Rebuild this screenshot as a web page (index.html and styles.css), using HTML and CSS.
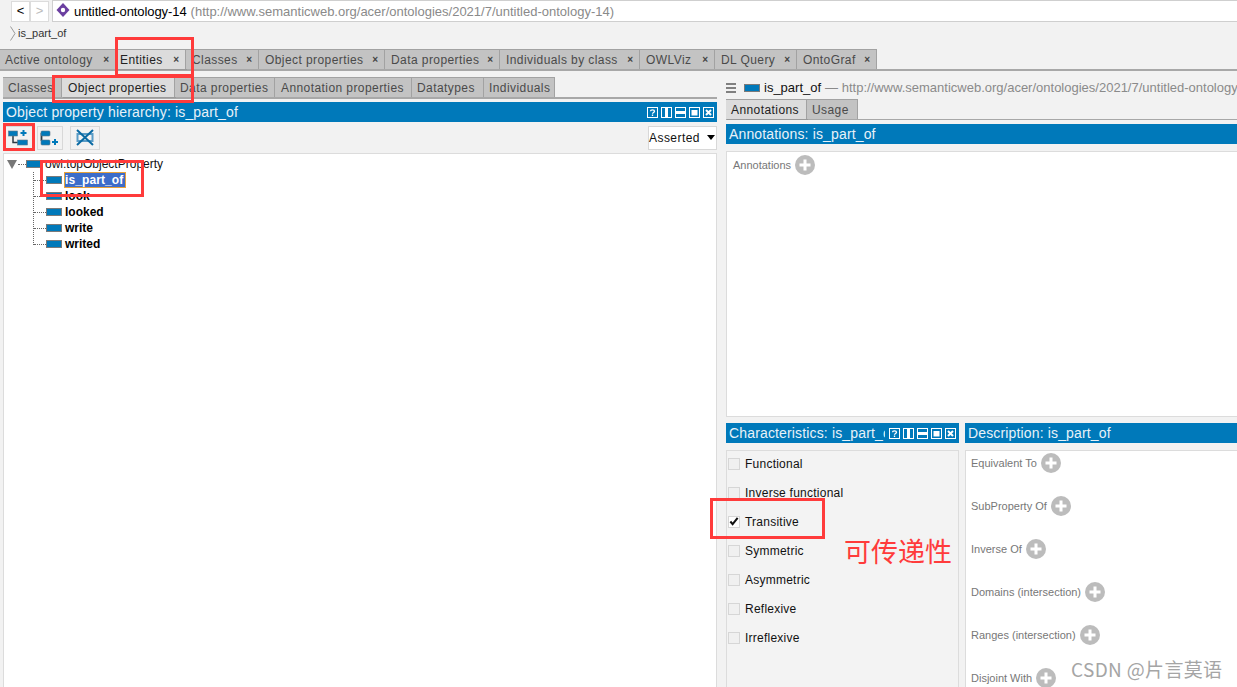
FILE: index.html
```html
<!DOCTYPE html>
<html lang="en">
<head>
<meta charset="utf-8">
<title>untitled-ontology-14</title>
<link rel="stylesheet" href="styles.css">
</head>
<body>
<svg class="defs" width="0" height="0" aria-hidden="true">
  <defs>
    <symbol id="prop" viewBox="0 0 16 8"><rect x="0.5" y="0.5" width="15" height="7" fill="#0079ba" stroke="#7a7a7a"/></symbol>
    <symbol id="plus" viewBox="0 0 20 20"><circle cx="10" cy="10" r="10" fill="#bcbcbc"/><path d="M10 4.500v11M4.500 10h11" stroke="#fff" stroke-width="3"/></symbol>
    <symbol id="ctl-help" viewBox="0 0 11 11"><rect width="11" height="11" fill="#fff"/><rect x="1" y="1" width="9" height="9" fill="#0079ba"/><path d="M3.500 4.200c0-1.800 4-1.800 4 0 0 1.300-2 1.300-2 2.600M5.500 7.500v1.500" stroke="#fff" stroke-width="1.300" fill="none"/></symbol>
    <symbol id="ctl-v" viewBox="0 0 11 11"><rect width="11" height="11" fill="#fff"/><rect x="1" y="1" width="3" height="9" fill="#0079ba"/><rect x="7" y="1" width="3" height="9" fill="#0079ba"/></symbol>
    <symbol id="ctl-h" viewBox="0 0 11 11"><rect width="11" height="11" fill="#fff"/><rect x="1" y="1" width="9" height="3" fill="#0079ba"/><rect x="1" y="7" width="9" height="3" fill="#0079ba"/></symbol>
    <symbol id="ctl-max" viewBox="0 0 11 11"><rect width="11" height="11" fill="#fff"/><rect x="1" y="1" width="9" height="9" fill="#0079ba"/><rect x="2.500" y="3" width="6" height="5.500" fill="#fff"/></symbol>
    <symbol id="ctl-x" viewBox="0 0 11 11"><rect width="11" height="11" fill="#fff"/><rect x="1" y="1" width="9" height="9" fill="#0079ba"/><path d="M3 3l5 5M8 3l-5 5" stroke="#fff" stroke-width="2"/></symbol>
  </defs>
</svg>

<header class="nav">
  <div class="nav-btn">&lt;</div>
  <div class="nav-btn dim">&gt;</div>
  <div class="address">
    <svg class="onto" width="14" height="14" viewBox="0 0 14 14"><path d="M7 0l6.500 7L7 14 .5 7z" fill="#6b3fa0"/><circle cx="7" cy="7" r="2.200" fill="#fff"/></svg>
    <span class="addr-name">untitled-ontology-14</span>
    <span class="addr-url">(http://www.semanticweb.org/acer/ontologies/2021/7/untitled-ontology-14)</span>
  </div>
</header>
<div class="crumb">
  <svg width="6" height="15" viewBox="0 0 6 15"><path d="M.5 .5l4.500 7-4.500 7" fill="none" stroke="#9a9a9a"/></svg>
  <span>is_part_of</span>
</div>

<nav class="tabs main-tabs">
  <div class="tab t1">Active ontology<i>×</i></div>
  <div class="tab t2 active">Entities<i>×</i></div>
  <div class="tab t3">Classes<i>×</i></div>
  <div class="tab t4">Object properties<i>×</i></div>
  <div class="tab t5">Data properties<i>×</i></div>
  <div class="tab t6">Individuals by class<i>×</i></div>
  <div class="tab t7">OWLViz<i>×</i></div>
  <div class="tab t8">DL Query<i>×</i></div>
  <div class="tab t9">OntoGraf<i>×</i></div>
</nav>

<main class="workspace">
  <section class="left">
    <nav class="tabs sub-tabs">
      <div class="tab s1">Classes</div>
      <div class="tab s2 active">Object properties</div>
      <div class="tab s3">Data properties</div>
      <div class="tab s4">Annotation properties</div>
      <div class="tab s5">Datatypes</div>
      <div class="tab s6">Individuals</div>
    </nav>
    <div class="bar hierarchy-bar">
      <span class="bar-title">Object property hierarchy: is_part_of</span>
      <div class="ctls">
        <svg><use href="#ctl-help"/></svg><svg><use href="#ctl-v"/></svg><svg><use href="#ctl-h"/></svg><svg><use href="#ctl-max"/></svg><svg><use href="#ctl-x"/></svg>
      </div>
    </div>
    <div class="toolbar">
      <div class="tool">
        <svg width="20" height="16" viewBox="0 0 20 16"><path d="M5 4v8.500h5" fill="none" stroke="#2b3a44" stroke-width="1.500"/><rect x=".5" y="1" width="9" height="5" fill="#0079ba" stroke="#5f7686" stroke-width=".6"/><rect x="9.500" y="10" width="10" height="5" fill="#0079ba" stroke="#5f7686" stroke-width=".6"/><path d="M15.500 0v6M12.500 3h6" stroke="#0079ba" stroke-width="2"/></svg>
      </div>
      <div class="tool t-second">
        <svg width="20" height="16" viewBox="0 0 20 16"><path d="M1.500 3v8" stroke="#2b3a44" stroke-width="1.800"/><rect x="1" y="1" width="9" height="5" rx="1" fill="#0079ba" stroke="#5f7686" stroke-width=".6"/><rect x="1" y="10" width="9" height="5" rx="1" fill="#0079ba" stroke="#5f7686" stroke-width=".6"/><path d="M15 9v6M12 12h6" stroke="#0079ba" stroke-width="2"/></svg>
      </div>
      <div class="tool t-third">
        <svg width="18" height="17" viewBox="0 0 18 17"><rect x="1.500" y="5" width="15" height="7" fill="none" stroke="#5a9cc6" stroke-width="2"/><path d="M1 1l16 15M17 1L1 16" stroke="#0a6aa3" stroke-width="2"/></svg>
      </div>
      <div class="select">Asserted<b></b></div>
    </div>
    <div class="tree">
      <div class="node root"><b class="twist"></b><span class="dots d-root"></span><svg class="prop"><use href="#prop"/></svg><span>owl:topObjectProperty</span></div>
      <div class="children">
        <div class="node kid"><span class="dots"></span><svg class="prop"><use href="#prop"/></svg><strong class="selected">is_part_of</strong></div>
        <div class="node kid"><span class="dots"></span><svg class="prop"><use href="#prop"/></svg><strong>look</strong></div>
        <div class="node kid"><span class="dots"></span><svg class="prop"><use href="#prop"/></svg><strong>looked</strong></div>
        <div class="node kid"><span class="dots"></span><svg class="prop"><use href="#prop"/></svg><strong>write</strong></div>
        <div class="node kid"><span class="dots"></span><svg class="prop"><use href="#prop"/></svg><strong>writed</strong></div>
      </div>
    </div>
  </section>

  <section class="right">
    <div class="ent-head">
      <svg class="burger" width="12" height="10" viewBox="0 0 12 10"><path d="M0 1h12M0 5h12M0 9h12" stroke="#808080" stroke-width="2"/></svg>
      <svg class="prop-head"><use href="#prop"/></svg>
      <span class="ent-name">is_part_of</span>
      <span class="ent-url">— http://www.semanticweb.org/acer/ontologies/2021/7/untitled-ontology</span>
    </div>
    <nav class="tabs right-tabs">
      <div class="tab r1 active">Annotations</div>
      <div class="tab r2">Usage</div>
    </nav>
    <div class="bar ann-bar"><span class="bar-title">Annotations: is_part_of</span></div>
    <div class="ann-panel">
      <div class="frame-row"><span>Annotations</span><svg class="plus"><use href="#plus"/></svg></div>
    </div>
    <div class="bottom">
      <div class="col-char">
        <div class="bar char-bar">
          <span class="bar-title clip">Characteristics: is_part_of</span>
          <div class="ctls">
            <svg><use href="#ctl-help"/></svg><svg><use href="#ctl-v"/></svg><svg><use href="#ctl-h"/></svg><svg><use href="#ctl-max"/></svg><svg><use href="#ctl-x"/></svg>
          </div>
        </div>
        <div class="char-panel">
          <div class="check"><i></i>Functional</div>
          <div class="check"><i></i>Inverse functional</div>
          <div class="check"><i class="on"><svg width="11" height="11" viewBox="0 0 11 11"><path d="M1.500 5.500l2.500 3 5.500-7" fill="none" stroke="#111" stroke-width="2.200"/></svg></i>Transitive</div>
          <div class="check"><i></i>Symmetric</div>
          <div class="check"><i></i>Asymmetric</div>
          <div class="check"><i></i>Reflexive</div>
          <div class="check"><i></i>Irreflexive</div>
        </div>
      </div>
      <div class="col-desc">
        <div class="bar"><span class="bar-title">Description: is_part_of</span></div>
        <div class="desc-panel">
          <div class="frame-row"><span>Equivalent To</span><svg class="plus"><use href="#plus"/></svg></div>
          <div class="frame-row"><span>SubProperty Of</span><svg class="plus"><use href="#plus"/></svg></div>
          <div class="frame-row"><span>Inverse Of</span><svg class="plus"><use href="#plus"/></svg></div>
          <div class="frame-row"><span>Domains (intersection)</span><svg class="plus"><use href="#plus"/></svg></div>
          <div class="frame-row"><span>Ranges (intersection)</span><svg class="plus"><use href="#plus"/></svg></div>
          <div class="frame-row"><span>Disjoint With</span><svg class="plus"><use href="#plus"/></svg></div>
        </div>
      </div>
    </div>
  </section>
</main>

<div class="mark m-entities"></div>
<div class="mark m-objprops"></div>
<div class="mark m-add"></div>
<div class="mark m-node"></div>
<div class="mark m-trans"></div>
<div class="note">可传递性</div>
<div class="watermark">CSDN @片言莫语</div>
</body>
</html>
```
FILE: styles.css
```css
* { box-sizing: border-box; }
html, body { margin: 0; height: 687px; overflow: hidden; }
body {
  position: relative;
  width: 1237px;
  background: #f2f2f2;
  color: #111;
  font: 12px "Liberation Sans", Arial, sans-serif;
}
.defs { position: absolute; }

.nav { display: flex; height: 22px; padding-left: 11px; background: #f2f2f2; }
.nav-btn {
  width: 19px; height: 21px; margin-top: 1px;
  background: #fff; border: 1px solid #dcdcdc;
  text-align: center; font-size: 13px; line-height: 18px; color: #000;
}
.nav-btn.dim { color: #bbb; }
.address {
  display: flex; align-items: center;
  flex: 1; margin-left: 3px; height: 22px; padding-left: 3px;
  background: #fff; border: 1px solid #cfcfcf; border-right: 0;
  font-size: 13px; white-space: nowrap; overflow: hidden;
}
.onto { flex: none; margin-right: 4px; margin-top: -3px; }
.addr-name { color: #000; margin-right: 4px; letter-spacing: -.08px; }
.addr-url { color: #8a8a8a; }

.crumb { display: flex; align-items: center; gap: 2px; height: 22px; padding: 0 0 0 10px; font-size: 11px; color: #333; }

.tabs { display: flex; }
.tab {
  display: flex; align-items: center; justify-content: space-between;
  height: 100%;
  background: #c3c3c3; border: 1px solid #a2a2a2; border-bottom: 0; border-left: 0;
  color: #4a4a4a; letter-spacing: .42px; white-space: nowrap;
  padding-left: 5px;
}
.tab.active { background: #dcdcdc; color: #222; box-shadow: 1px 1px 0 #9a9a9a; }
.main-tabs { height: 20px; margin-top: 5px; }
.main-tabs .tab { padding-left: 6px; padding-right: 6px; }
.main-tabs .t1 { padding-left: 5px; }
.main-tabs .t2 { padding-left: 4px; }
.main-tabs i { font-style: normal; font-weight: 700; font-size: 10px; letter-spacing: 0; color: #444; }
.t1 { width: 116px; } .t2 { width: 70px; } .t3 { width: 73px; } .t4 { width: 126px; } .t5 { width: 115px; }
.t6 { width: 140px; } .t7 { width: 75px; } .t8 { width: 82px; } .t9 { width: 80px; }

.workspace {
  display: grid; grid-template-columns: 720px 517px;
  height: 618px;
  border-top: 2px solid #a8a8a8;
}
.left { display: flex; flex-direction: column; padding: 6px 0 0 3px; }
.sub-tabs { width: 714px; height: 22px; flex: none; border-bottom: 2px solid #a8a8a8; }
.s1 { width: 59px; } .s2 { width: 113px; padding-left: 6px; } .s3 { width: 100px; } .s4 { width: 137px; padding-left: 6px; } .s5 { width: 72px; } .s6 { width: 71px; }

.bar {
  display: flex; align-items: center; justify-content: space-between;
  height: 20px; flex: none;
  background: #0079ba; color: #e8f2f8; font-size: 14px; letter-spacing: .15px; white-space: nowrap; overflow: hidden;
}
.bar-title { padding-left: 3px; }
.hierarchy-bar { width: 714px; margin-top: 3px; }
.ctls { display: flex; gap: 3px; padding-right: 3px; flex: none; }
.ctls svg { width: 11px; height: 11px; display: block; }

.toolbar { display: flex; align-items: center; width: 714px; height: 31px; gap: 1px; }
.tool { display: flex; align-items: center; justify-content: center; width: 30px; height: 24px; border: 1px solid #d8d8d8; }
.t-second { width: 26px; margin-left: 3px; }
.t-third { margin-left: 6px; }
.select {
  display: flex; align-items: center; justify-content: space-between;
  width: 69px; height: 24px; margin-left: auto; padding: 0 1px 0 0;
  background: #fff; border: 1px solid #d8d8d8; font-size: 12px; letter-spacing: .45px; color: #111;
}
.select b { border: 4px solid transparent; border-top: 5px solid #000; border-bottom: 0; }

.tree { width: 714px; flex: 1; background: #fff; border: 1px solid #dcdcdc; border-bottom: 0; padding-top: 2px; }
.node { display: flex; align-items: center; height: 16px; white-space: nowrap; }
.root { padding-left: 3px; }
.twist { width: 0; height: 0; border: 5px solid transparent; border-top: 9px solid #777; border-bottom: 0; margin-right: 1px; }
.dots { border-top: 1px dotted #666; }
.d-root { width: 8px; }
.prop { width: 16px; height: 8px; flex: none; margin-right: 3px; }
.children { margin-left: 29px; border-left: 1px dotted #666; height: 73px; }
.kid .dots { width: 12px; }
.kid .prop { margin-right: 2px; }
.kid strong { font-weight: 700; color: #000; padding-left: 1px; }
.kid .selected { background: #3c6cc9; color: #fff; border: 1px solid #e8a33a; padding: 0 2px 0 0; line-height: 14px; letter-spacing: .1px; }

.right { display: flex; flex-direction: column; padding: 0 0 0 6px; min-width: 0; }
.ent-head { display: flex; align-items: center; height: 28px; padding: 5px 0 0 0; font-size: 13px; white-space: nowrap; overflow: hidden; }
.burger { flex: none; margin-left: -2px; }
.prop-head { width: 16px; height: 8px; margin: 0 4px 0 8px; flex: none; }
.ent-name { color: #111; margin-right: 4px; }
.ent-url { color: #8a8a8a; }
.right-tabs { height: 21px; flex: none; border-bottom: 1px solid #a8a8a8; }
.r1 { width: 81px; } .r2 { width: 51px; }
.ann-bar { margin-top: 4px; }
.ann-panel { height: 266px; margin-top: 7px; background: #fff; border: 1px solid #dcdcdc; border-right: 0; padding-left: 6px; padding-top: 3px; flex: none; }
.frame-row { display: flex; align-items: center; gap: 4px; height: 20px; font-size: 11px; color: #777; }
.plus { width: 20px; height: 20px; flex: none; }

.bottom { display: grid; grid-template-columns: 233px 272px; column-gap: 6px; margin-top: 6px; flex: 1; min-height: 0; }
.char-panel { height: 240px; margin-top: 7px; background: #f3f3f3; border: 1px solid #dcdcdc; padding: 0 0 0 1px; }
.check { display: flex; align-items: center; height: 29px; color: #111; letter-spacing: .02em; }
.check:first-child { margin-top: -2px; }
.check i {
  display: flex; align-items: center; justify-content: center;
  width: 12px; height: 12px; margin-right: 5px;
  background: #f0f0f0; border: 1px solid #d6d6d6;
}
.check i.on { background: #fff; }
.clip { overflow: hidden; width: 159px; flex: none; }
.desc-panel { height: 240px; margin-top: 7px; background: #fff; border: 1px solid #dcdcdc; border-right: 0; padding: 2px 0 0 5px; }
.desc-panel .frame-row { margin-bottom: 23px; }

.mark { position: absolute; border: 3px solid #ff3b3b; pointer-events: none; }
.m-entities { left: 115px; top: 37px; width: 79px; height: 40px; }
.m-objprops { left: 52px; top: 75px; width: 142px; height: 28px; }
.m-add { left: 3px; top: 123px; width: 32px; height: 28px; }
.m-node { left: 40px; top: 160px; width: 104px; height: 37px; }
.m-trans { left: 710px; top: 498px; width: 115px; height: 41px; }
.note { position: absolute; left: 844px; top: 533px; font: 27px "Noto Sans CJK SC", sans-serif; line-height: 36px; color: #ff3b3b; }
.watermark { position: absolute; left: 1071px; top: 657px; font: 19px "Noto Sans CJK SC", sans-serif; letter-spacing: .35px; line-height: 23px; color: #8f8f8f; opacity: .8; }
```
